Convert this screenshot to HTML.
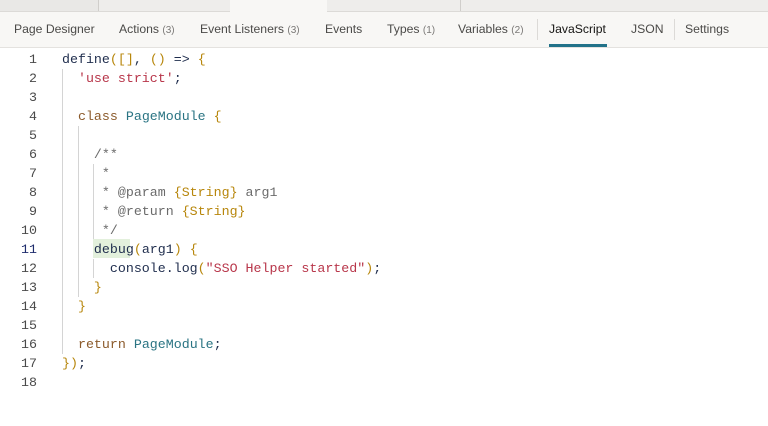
<!DOCTYPE html><html><head><style>
body{margin:0;width:768px;height:426px;background:#fff;position:relative;overflow:hidden;font-family:"Liberation Sans",sans-serif}
.top{position:absolute;left:0;top:0;width:768px;height:11px;background:#eeedeb;border-bottom:1px solid #dcdad7}
.tabs{position:absolute;left:0;top:12px;width:768px;height:35px;background:#f8f7f5;border-bottom:1px solid #e4e2df}
.t{position:absolute;top:10px;font-size:12.2px;color:#4b4a48;white-space:nowrap}
.t small{font-size:10px;color:#7a7876}
.sep{position:absolute;top:7px;width:1px;height:21px;background:#dcdad7}
.code{position:absolute;left:0;top:50px;font-family:"Liberation Mono",monospace;font-size:13.3px}
.l{height:19px;line-height:19px;position:relative;white-space:pre;color:#1f2d4d}
.n{position:absolute;left:0;width:37px;text-align:right;color:#4a4a4a}
.c{position:absolute;left:62px}
.g{position:absolute;width:1px;background:#d4d4d4}
.p{color:#b7860b}.s{color:#b8364a}.k{color:#8b5a2b}.ty{color:#2a7483}.cm{color:#6b6b6b}
</style></head><body>
<div class="top"><div style="position:absolute;left:0;top:0;width:98px;height:11px;background:#e9e8e6"></div><div style="position:absolute;left:98px;top:0;width:1px;height:11px;background:#d0cecb"></div><div style="position:absolute;left:230px;top:0;width:97px;height:12px;background:#f8f7f5"></div><div style="position:absolute;left:460px;top:0;width:1px;height:11px;background:#d0cecb"></div></div>
<div class="tabs">
<span class="t" style="left:14px">Page Designer</span>
<span class="t" style="left:119px">Actions <small>(3)</small></span>
<span class="t" style="left:200px">Event Listeners <small>(3)</small></span>
<span class="t" style="left:325px">Events</span>
<span class="t" style="left:387px">Types <small>(1)</small></span>
<span class="t" style="left:458px">Variables <small>(2)</small></span>
<div class="sep" style="left:537px"></div>
<span class="t" style="left:549px;color:#161513">JavaScript</span>
<div style="position:absolute;left:549px;top:32px;width:58px;height:3px;background:#227289"></div>
<span class="t" style="left:631px">JSON</span>
<div class="sep" style="left:674px"></div>
<span class="t" style="left:685px">Settings</span>
</div>
<div class="g" style="left:62px;top:69px;height:285px"></div>
<div class="g" style="left:78px;top:126px;height:171px"></div>
<div class="g" style="left:93px;top:164px;height:76px"></div>
<div class="g" style="left:93px;top:259px;height:19px"></div>
<div style="position:absolute;left:93px;top:239px;width:37px;height:19px;background:#e3f0dc"></div>
<div class="code">
<div class="l"><span class="n">1</span><span class="c">define<span class="p">([]</span>, <span class="p">()</span> =&gt; <span class="p">{</span></span></div>
<div class="l"><span class="n">2</span><span class="c">  <span class="s">'use strict'</span>;</span></div>
<div class="l"><span class="n">3</span></div>
<div class="l"><span class="n">4</span><span class="c">  <span class="k">class</span> <span class="ty">PageModule</span> <span class="p">{</span></span></div>
<div class="l"><span class="n">5</span></div>
<div class="l"><span class="n">6</span><span class="c cm">    /**</span></div>
<div class="l"><span class="n">7</span><span class="c cm">     *</span></div>
<div class="l"><span class="n">8</span><span class="c cm">     * @param <span class="p">{String}</span> arg1</span></div>
<div class="l"><span class="n">9</span><span class="c cm">     * @return <span class="p">{String}</span></span></div>
<div class="l"><span class="n">10</span><span class="c cm">     */</span></div>
<div class="l"><span class="n" style="color:#1f2d6d">11</span><span class="c">    debug<span class="p">(</span>arg1<span class="p">)</span> <span class="p">{</span></span></div>
<div class="l"><span class="n">12</span><span class="c">      console.log<span class="p">(</span><span class="s">"SSO Helper started"</span><span class="p">)</span>;</span></div>
<div class="l"><span class="n">13</span><span class="c">    <span class="p">}</span></span></div>
<div class="l"><span class="n">14</span><span class="c">  <span class="p">}</span></span></div>
<div class="l"><span class="n">15</span></div>
<div class="l"><span class="n">16</span><span class="c">  <span class="k">return</span> <span class="ty">PageModule</span>;</span></div>
<div class="l"><span class="n">17</span><span class="c"><span class="p">})</span>;</span></div>
<div class="l"><span class="n">18</span></div>
</div>
</body></html>
